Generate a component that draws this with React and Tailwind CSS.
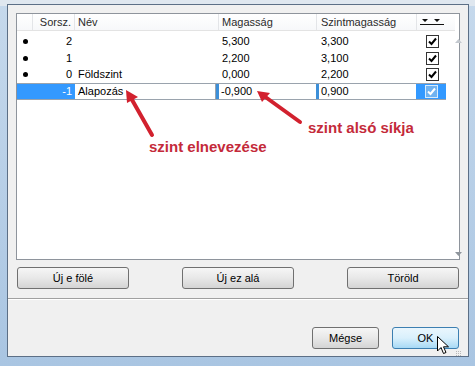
import React from "react";

const font = { fontFamily: '"Segoe UI", "Liberation Sans", Arial, sans-serif' };

function Check({ sel }) {
  return (
    <div
      className={
        "w-[13px] h-[13px] border flex items-center justify-center " +
        (sel ? "border-[#d6ebfd] bg-[#6fb2f0]" : "border-[#333] bg-white")
      }
    >
      <svg width="11" height="11" viewBox="0 0 11 11">
        <path d="M2 5.5 L4.5 8 L9 2.5" fill="none" stroke={sel ? "#ffffff" : "#000"} strokeWidth="2" />
      </svg>
    </div>
  );
}

function Row({ n, name, m, sz, h = "h-[16px]" }) {
  return (
    <div className={"flex items-center text-[11px] text-black " + h}>
      <div className="w-[16px] flex justify-center">
        <div className="w-[5px] h-[5px] rounded-full bg-black" />
      </div>
      <div className="w-[42px] text-right pr-[3px]">{n}</div>
      <div className="w-[144px] pl-[3px]">{name}</div>
      <div className="w-[98px] pl-[3px]">{m}</div>
      <div className="w-[100px] pl-[4px]">{sz}</div>
      <div className="w-[30px] flex justify-center">
        <Check />
      </div>
    </div>
  );
}

function Btn({ children, w = "w-[112px]", hot }) {
  return (
    <div
      className={
        w +
        " h-[22px] rounded-[3px] border flex items-center justify-center text-[11px] text-black " +
        (hot
          ? "border-[#3c7fb1] bg-gradient-to-b from-[#eaf6fd] via-[#d9f0fc] to-[#a7d9f5]"
          : "border-[#707070] bg-gradient-to-b from-[#f6f6f6] via-[#e8e8e8] to-[#d4d4d4]")
      }
    >
      {children}
    </div>
  );
}

export default function App() {
  return (
    <div className="w-[475px] h-[366px] bg-gradient-to-b from-[#c6d9ec] to-[#a9c5e2] relative overflow-hidden" style={font}>
      <div className="absolute left-0 top-0 w-[475px] h-[6px] bg-[#dfe7ef]" />
      <div className="absolute left-[7px] top-[4px] right-[6px] bottom-[9px] border border-[#5c6f86] bg-[#f0f0f0] flex flex-col">
        {/* list */}
        <div className="mx-[8px] mt-[8px] h-[247px] border border-[#8e949c] bg-white flex">
          <div className="flex-1 flex flex-col">
            {/* header */}
            <div className="flex h-[17px] items-center text-[11px] text-[#2b2b2b] border-b border-[#e3e3e3] bg-gradient-to-b from-white to-[#f7f8fa]">
              <div className="w-[16px] h-full border-r border-[#e3e5e8]" />
              <div className="w-[42px] text-right pr-[3px] border-r border-[#e3e5e8] h-full leading-[17px]">Sorsz.</div>
              <div className="w-[144px] pl-[3px] border-r border-[#e3e5e8] h-full leading-[17px]">Név</div>
              <div className="w-[98px] pl-[3px] border-r border-[#e3e5e8] h-full leading-[17px]">Magasság</div>
              <div className="w-[100px] pl-[4px] border-r border-[#e3e5e8] h-full leading-[17px]">Szintmagasság</div>
              <div className="w-[30px] h-full flex justify-center items-center">
                <svg width="24" height="8" viewBox="0 0 24 8">
                  <path d="M2 1 L8 1 L5 4 Z M14 1 L20 1 L17 4 Z" fill="#111" />
                  <line x1="0" y1="6.5" x2="24" y2="6.5" stroke="#111" strokeWidth="1" />
                </svg>
              </div>
            </div>
            <div className="h-[2px]" />
            <Row n="2" name="" m="5,300" sz="3,300" h="h-[17px]" />
            <Row n="1" name="" m="2,200" sz="3,100" />
            <Row n="0" name="Földszint" m="0,000" sz="2,200" h="h-[17px]" />
            {/* selected row */}
            <div className="flex h-[17px] items-stretch text-[11px] text-black border-y border-[#9aa3ad] mr-[9px]">
              <div className="w-[58px] bg-[#3399ff] text-right pr-[3px] text-white leading-[15px]">-1</div>
              <div className="w-[141px] pl-[3px] leading-[15px] border-r border-[#9aa3ad]">Alapozás</div>
              <div className="w-[100px] border-l-[3px] border-[#3d8fd8] pl-[2px] leading-[15px]">-0,900</div>
              <div className="w-[100px] border-l-[3px] border-[#3d8fd8] pl-[2px] leading-[15px]">0,900</div>
              <div className="w-[30px] bg-[#3399ff] flex items-center justify-center">
                <Check sel />
              </div>
            </div>
          </div>
          {/* scrollbar */}
          <div className="w-[15px] flex flex-col justify-between items-center py-[25px] pb-[3px]">
            <svg width="7" height="4" viewBox="0 0 7 4"><path d="M0 4 L3.5 0 L7 4 Z" fill="#c4c9cf" /></svg>
            <svg width="7" height="4" viewBox="0 0 7 4"><path d="M0 0 L3.5 4 L7 0 Z" fill="#8f959c" /></svg>
          </div>
        </div>
        {/* buttons */}
        <div className="mx-[9px] mt-[7px] flex justify-between">
          <Btn>Új e fölé</Btn>
          <Btn>Új ez alá</Btn>
          <Btn>Töröld</Btn>
        </div>
        <div className="mt-[9px] h-[2px] border-t border-[#a0a0a0] border-b border-b-white" />
        <div className="flex-1 flex justify-end items-start pt-[27px] pr-[9px] gap-[13px]">
          <Btn w="w-[67px]">Mégse</Btn>
          <Btn w="w-[67px]" hot>OK</Btn>
        </div>
      </div>

      {/* cursor */}
      <svg className="absolute left-[437px] top-[336px]" width="13" height="20" viewBox="0 0 13 20">
        <path d="M0.5 0.5 L0.5 15 L4 11.5 L6.5 17.5 L9 16.5 L6.5 10.8 L11.5 10.8 Z" fill="#fff" stroke="#000" strokeWidth="1" />
      </svg>
      {/* grip dots */}
      <div className="absolute left-[456px] top-[351px] grid grid-cols-3 gap-[1px]">
        {Array.from({ length: 9 }).map((_, i) => (
          <div key={i} className="w-[1px] h-[1px] bg-[#b8b8b8]" />
        ))}
      </div>

      {/* annotations */}
      <svg className="absolute left-0 top-0" width="475" height="366" viewBox="0 0 475 366">
        <g stroke="#d2212e" strokeWidth="4" strokeLinecap="round" fill="#d2212e">
          <line x1="152" y1="135" x2="131" y2="98" />
          <line x1="300" y1="122" x2="264" y2="96" />
        </g>
        <g fill="#d2212e">
          <path d="M126 90 L138 97 L127 103 Z" />
          <path d="M257 91 L270 93 L262 102 Z" />
        </g>
      </svg>
      <div className="absolute left-[149px] top-[139px] text-[15px] font-bold text-[#c42a3a] leading-none" style={{ fontFamily: '"Liberation Sans", Arial, sans-serif' }}>
        szint elnevezése
      </div>
      <div className="absolute left-[308px] top-[120px] text-[15px] font-bold text-[#c42a3a] leading-none" style={{ fontFamily: '"Liberation Sans", Arial, sans-serif' }}>
        szint alsó síkja
      </div>
    </div>
  );
}
